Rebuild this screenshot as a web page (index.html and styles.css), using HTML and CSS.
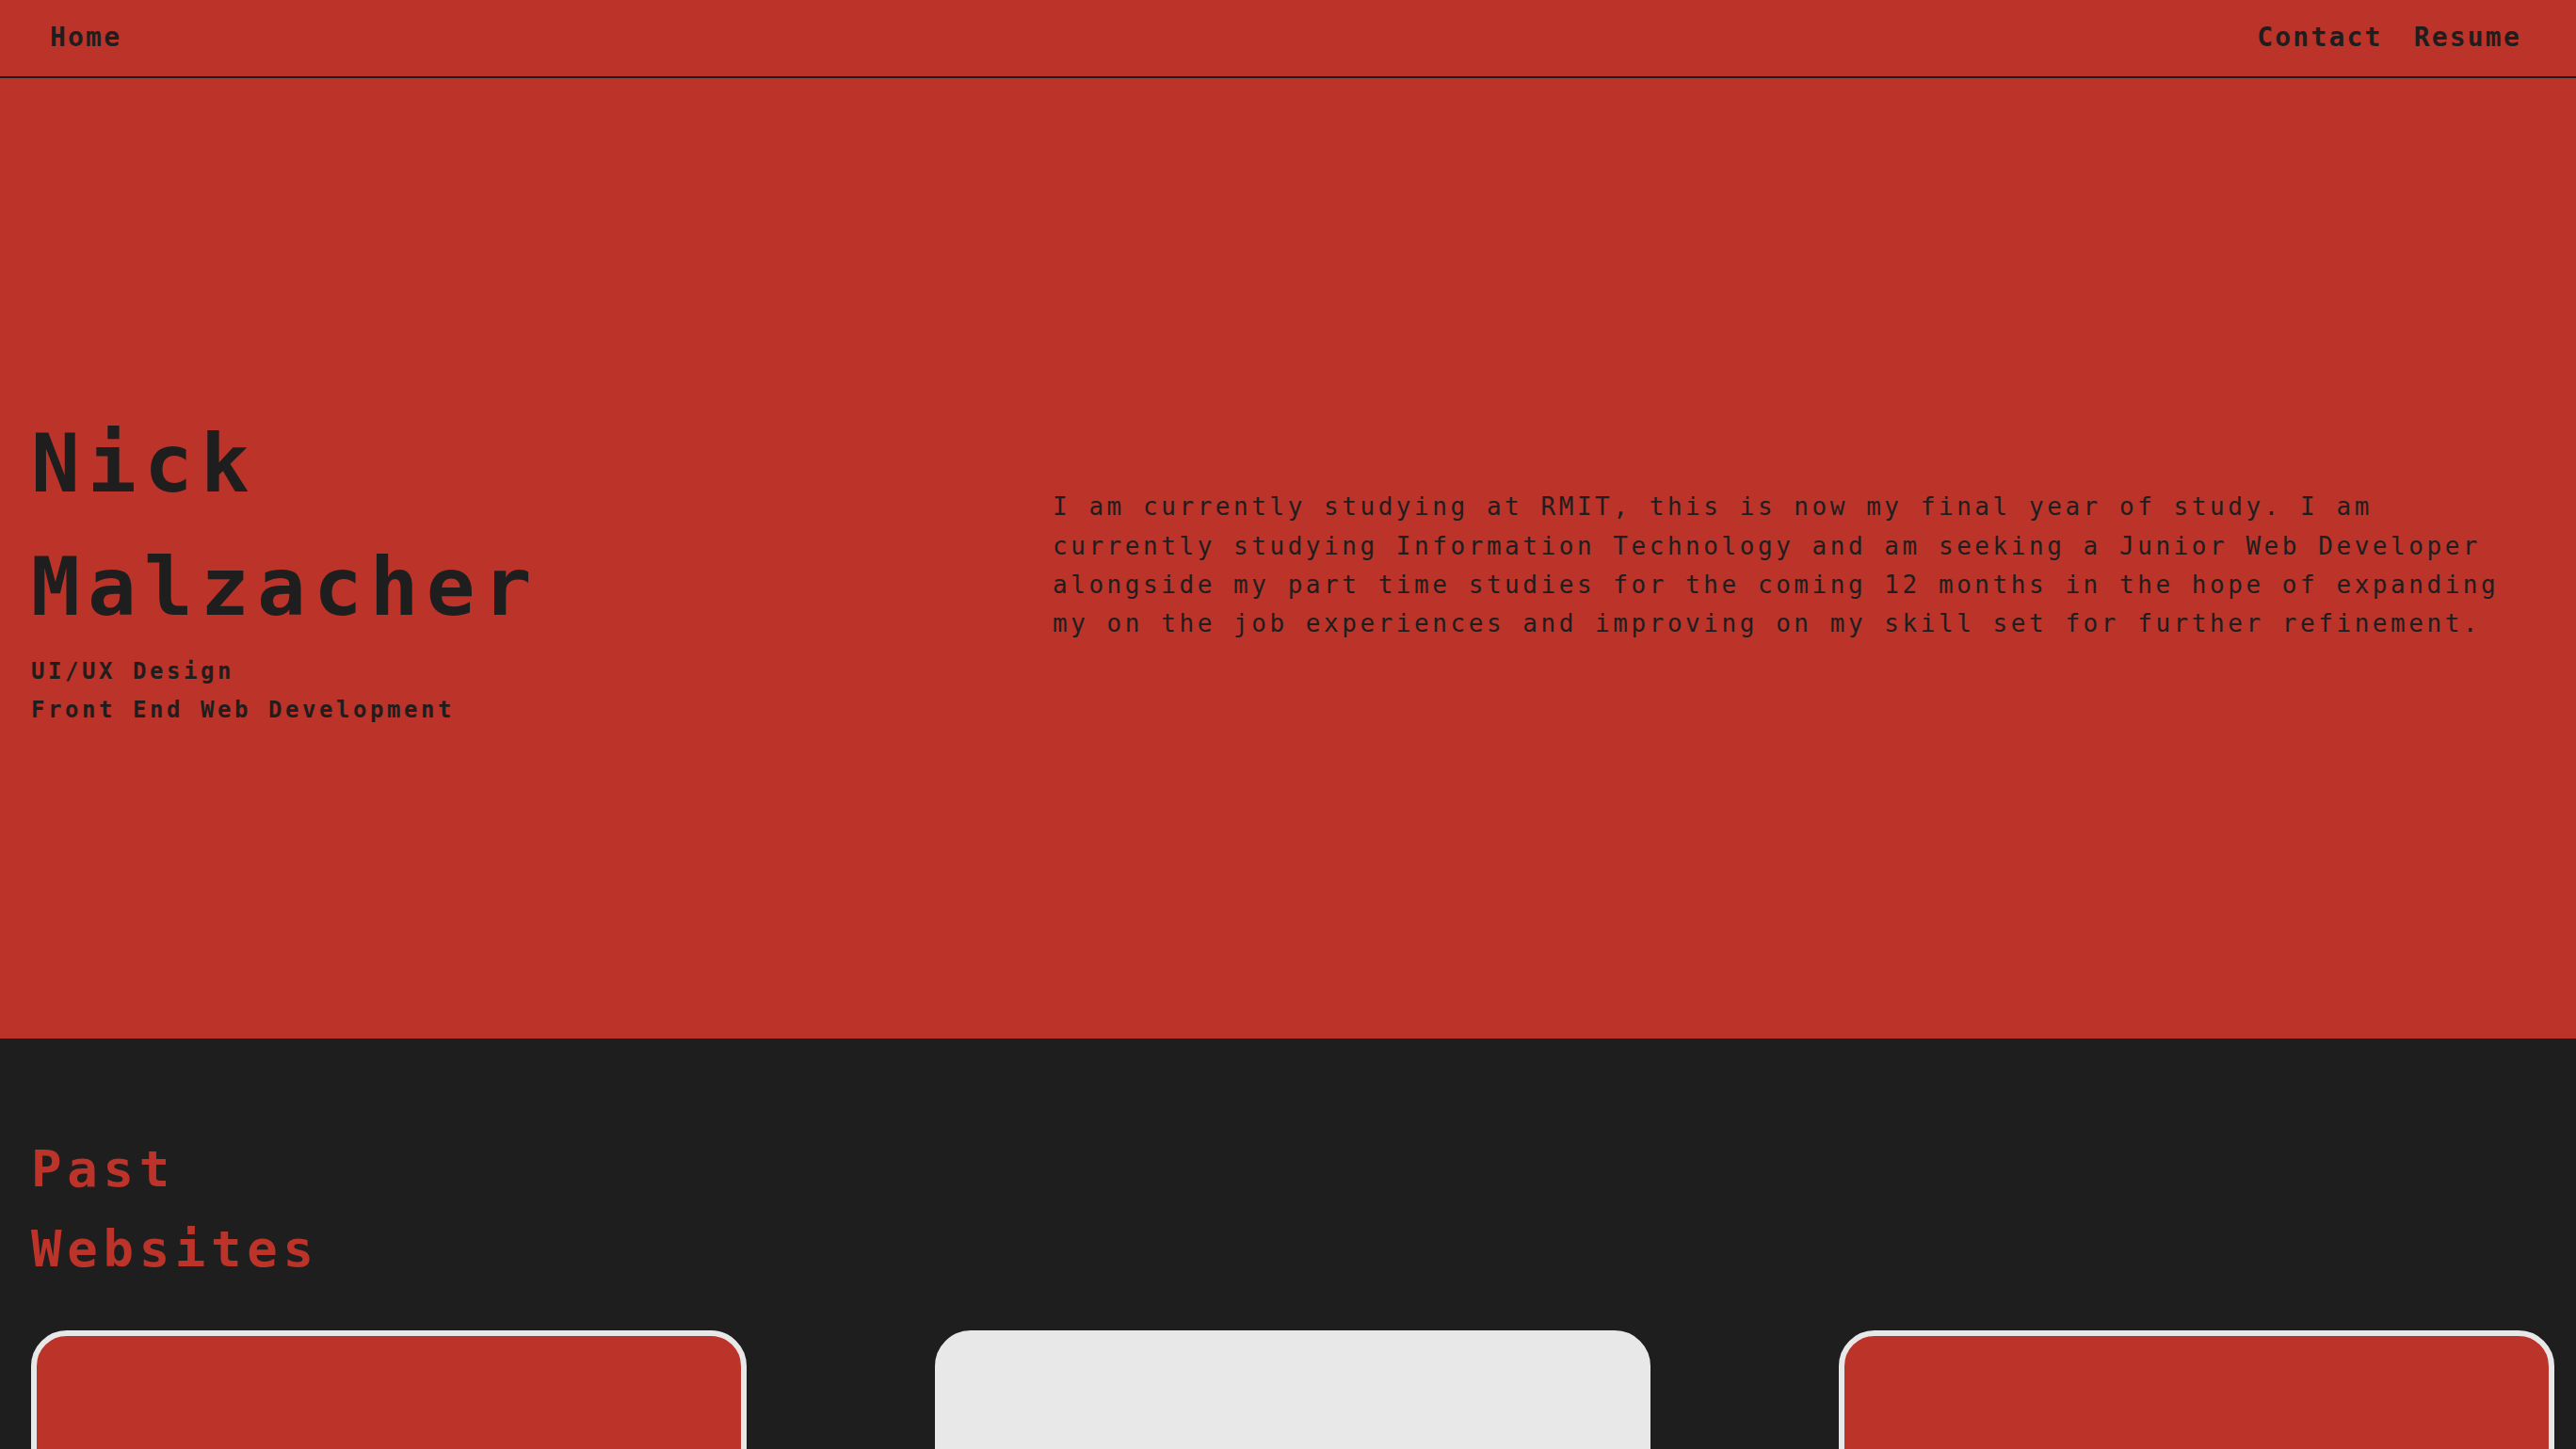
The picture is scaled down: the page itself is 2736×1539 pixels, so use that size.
FILE: index.html
```html
<!DOCTYPE html>
<html lang="en">
<head>
<meta charset="utf-8">
<title>Nick Malzacher</title>
<link rel="stylesheet" href="styles.css">
</head>
<body>
  <nav class="nav">
    <a class="nav-link" href="#">Home</a>
    <div class="nav-right">
      <a class="nav-link" href="#">Contact</a>
      <a class="nav-link" href="#">Resume</a>
    </div>
  </nav>
  <section class="hero">
    <div class="intro">
      <h1 class="name">Nick<br>Malzacher</h1>
      <p class="roles">UI/UX Design<br>Front End Web Development</p>
    </div>
    <p class="about">I am currently studying at RMIT, this is now my final year of study. I am currently studying Information Technology and am seeking a Junior Web Developer alongside my part time studies for the coming 12 months in the hope of expanding my on the job experiences and improving on my skill set for further refinement.</p>
  </section>
  <section class="work">
    <h2 class="work-title">Past<br>Websites</h2>
    <div class="cards">
      <div class="card card-red"></div>
      <div class="card card-light"></div>
      <div class="card card-red"></div>
    </div>
  </section>
</body>
</html>
```
FILE: styles.css
```css
* { box-sizing: border-box; }
html, body { margin: 0; padding: 0; }
body {
  background: #1e1e1e;
  color: #1e1e1e;
  font-family: "DejaVu Sans Mono", "Liberation Mono", monospace;
  overflow: hidden;
}
.nav {
  background: #bb3329;
  height: 83px;
  border-bottom: 2px solid #1e1e1e;
  display: flex;
  justify-content: space-between;
  align-items: flex-start;
  padding: 24px 58px 0 53px;
}
.nav-right {
  display: flex;
  gap: 33px;
}
.nav-link {
  color: #1e1e1e;
  text-decoration: none;
  font-weight: bold;
  font-size: 28px;
  line-height: 32px;
  letter-spacing: 2.2px;
}
.hero {
  background: #bb3329;
  height: 1020px;
  padding: 16px 33px 0 33px;
  display: flex;
  justify-content: space-between;
  align-items: center;
}
.intro {
  display: flex;
  flex-direction: column;
  gap: 4px;
}
.name {
  margin: 0;
  font-size: 86px;
  line-height: 131px;
  font-weight: bold;
  letter-spacing: 8.2px;
}
.roles {
  margin: 0;
  font-size: 24px;
  line-height: 41px;
  font-weight: bold;
  letter-spacing: 3.55px;
}
.about {
  margin: 0;
  width: 1585px;
  font-size: 26px;
  line-height: 41.3px;
  font-weight: normal;
  letter-spacing: 3.55px;
}
.work {
  padding: 96px 23px 0 33px;
}
.work-title {
  margin: 0 0 44px 0;
  color: #bb3329;
  font-size: 54px;
  line-height: 85px;
  font-weight: bold;
  letter-spacing: 5.7px;
}
.cards {
  display: flex;
  justify-content: space-between;
}
.card {
  width: 760px;
  height: 520px;
  border-radius: 38px;
  border: 6px solid #e8e8e8;
}
.card-red { background: #bb3329; }
.card-light { background: #e8e8e8; }
```
